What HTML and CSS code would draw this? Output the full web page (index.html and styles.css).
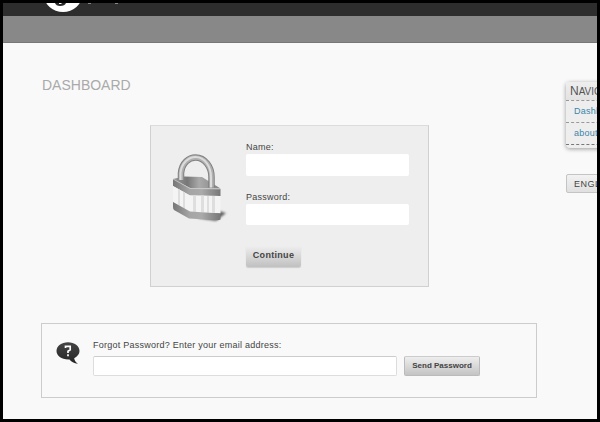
FILE: index.html
```
<!DOCTYPE html>
<html lang="en">
<head>
<meta charset="utf-8">
<title>Dashboard</title>
<link rel="stylesheet" href="styles.css">
</head>
<body>
<header class="top">
  <svg class="logo" width="80" height="10" viewBox="0 0 80 10">
    <ellipse cx="16" cy="-8" rx="19" ry="17" fill="#fff"/>
    <path d="M8 0H19Q18 3 13 3Q9 3 8 0Z" fill="#292929"/>
    <path d="M12 0H15L14 1H12Z" fill="#fff"/>
    <path d="M41 0h3v1h-3zM68 0h3v1h-3z" fill="#888"/>
  </svg>
</header>
<div class="bar"></div>
<div class="page">
  <main class="main">
    <h1 class="title">DASHBOARD</h1>
    <form class="login">
      <svg class="lock" width="60" height="72" viewBox="0 0 60 72">
        <defs>
          <linearGradient id="metal" x1="0" x2="1" y1="0" y2="0">
            <stop offset="0" stop-color="#999"/><stop offset=".3" stop-color="#777"/><stop offset=".55" stop-color="#aaa"/><stop offset="1" stop-color="#808080"/>
          </linearGradient>
          <linearGradient id="base" x1="0" x2="1" y1="0" y2="0">
            <stop offset="0" stop-color="#777"/><stop offset=".35" stop-color="#a5a5a5"/><stop offset=".6" stop-color="#aaa"/><stop offset="1" stop-color="#777"/>
          </linearGradient>
          <filter id="soft" x="-20%" y="-50%" width="140%" height="200%"><feGaussianBlur stdDeviation=".8"/></filter>
        </defs>
        <path d="M28 66L50 59L57 61L47 69Z" fill="#666" filter="url(#soft)"/>
        <path d="M4 27L15 24.500L33 25L51.500 36.500L21 36Z" fill="url(#metal)"/>
        <path d="M4 27L21 36.500L51.500 37V44L21 43.500L4 34Z" fill="url(#base)"/>
        <path d="M4 27L21 36.500L51.500 37" fill="none" stroke="#c4c4c4" stroke-width=".7"/>
        <path d="M4 34L21 43.500L51.500 44V61.500L21 59.500L4 50Z" fill="#f4f4f4"/>
        <path d="M9 37l2 1v16l-2-1zM14 39.500l2 1v16.500l-2-1zM24 43.500h3V60l-3-.3zM32 43.500h3v17l-3-.2zM38 44h2v17h-2zM43 44h3V61h-3z" fill="#dedede"/>
        <path d="M4 50L21 59.500L51.500 61.500V67.500Q50 68.500 46 68L20 66.500L5 58Q4 57 4 55Z" fill="url(#base)"/>
        <path d="M12 28V21C13 10.500 20 5.500 26.500 5.500C36 5.500 42.500 15 42.500 25V35.500" fill="none" stroke="#808080" stroke-width="6.500"/>
        <path d="M12 28V21C13 10.500 20 5.500 26.500 5.500C36 5.500 42.500 15 42.500 25V35.500" fill="none" stroke="#b0b0b0" stroke-width="4.500"/>
        <path d="M11.500 28V21C12.500 10.500 20 5 26.500 5C36 5 42 15 42 25V35.500" fill="none" stroke="#dcdcdc" stroke-width="2"/>
      </svg>
      <div class="fields">
        <label class="label" for="name">Name:</label>
        <input class="input" id="name" type="text">
        <label class="label label-password" for="password">Password:</label>
        <input class="input input-password" id="password" type="password">
        <button class="continue" type="button">Continue</button>
      </div>
    </form>
    <form class="forgot">
      <svg class="bubble" width="24" height="23" viewBox="0 0 24 23">
        <defs><linearGradient id="dark" x1="0" x2="0" y1="0" y2="1"><stop offset="0" stop-color="#444"/><stop offset="1" stop-color="#252525"/></linearGradient></defs>
        <path d="M12 .3C18.500 .3 23.500 4 23.500 9C23.500 12 21.500 14.500 18.200 16.200C18.500 18.500 20 20.500 22 21.800C18 21.500 15 19.500 13.500 17.500C6 18 .5 14 .5 9C.5 4 5.500 .3 12 .3Z" fill="url(#dark)"/>
        <path d="M9.500 6V4.300H14.200V7.800L12 9.300V11M12 12.300V14.300" fill="none" stroke="#fff" stroke-width="1.700"/>
      </svg>
      <div class="recover">
        <label class="label label-email" for="email">Forgot Password? Enter your email address:</label>
        <div class="row">
          <input class="email" id="email" type="text">
          <button class="send" type="button">Send Password</button>
        </div>
      </div>
    </form>
  </main>
  <aside class="side">
    <nav class="nav">
      <h2 class="nav-title">N<span class="small-caps">AVIGATION</span></h2>
      <a class="link">Dashboard</a>
      <a class="link">about</a>
    </nav>
    <button class="language" type="button">ENGLISH</button>
  </aside>
</div>
</body>
</html>
```
FILE: styles.css
```
* { box-sizing: border-box; }
body {
  margin: 0;
  width: 600px;
  height: 422px;
  border: 3px solid #000;
  overflow: hidden;
  background: #f9f9f9;
  color: #444;
  font-family: "Liberation Sans", Arial, sans-serif;
}
input, button { display: block; margin: 0; padding: 0; font-family: inherit; }
.top { height: 13px; padding-left: 44px; background: #2d2d2d; }
.logo { display: block; overflow: visible; }
.bar { height: 27px; background: #888; border-bottom: 1px solid #777; }
.page { display: flex; width: 680px; padding-left: 38px; }
.main { flex: none; width: 497px; padding-top: 34px; }
.title { margin: 0; height: 16px; padding-left: 1px; font-size: 14px; line-height: 16px; font-weight: 400; color: #aaa; }
.login {
  display: flex;
  width: 279px;
  height: 162px;
  margin: 32px 0 0 109px;
  padding: 15px 0 0 18px;
  background: #eee;
  border: 1px solid #d0d0d0;
  border-top-color: #dcdcdc;
}
.lock { flex: none; margin-top: 11px; }
.fields { margin-left: 17px; }
.label { display: block; height: 13px; font-size: 9px; line-height: 12px; letter-spacing: .25px; white-space: nowrap; }
.input { width: 163px; height: 22px; border: 0; border-radius: 2px; background: #fff; }
.label-password { height: 12px; margin-top: 15px; }
.input-password { height: 21px; margin-top: 1px; }
.continue {
  width: 55px;
  height: 21px;
  margin-top: 21px;
  padding-bottom: 3px;
  border: 0;
  border-radius: 2px;
  background: linear-gradient(#eee, #c0c0c0);
  box-shadow: 0 1px 1px #ccc;
  color: #444;
  font-size: 9px;
  font-weight: 700;
  letter-spacing: .3px;
}
.forgot {
  display: flex;
  width: 496px;
  height: 75px;
  margin-top: 36px;
  padding: 15px 0 0 14px;
  border: 1px solid #ccc;
}
.bubble { flex: none; margin-top: 3px; }
.recover { margin-left: 13px; }
.row { display: flex; gap: 7px; margin-top: 4px; }
.email { width: 304px; height: 20px; border: 1px solid #ddd; border-top-color: #ccc; border-radius: 2px; background: #fff; }
.send {
  width: 76px;
  height: 20px;
  padding-bottom: 1px;
  border: 1px solid #bbb;
  border-top-color: #ccc;
  border-radius: 2px;
  background: linear-gradient(#eee, #c4c4c4);
  color: #444;
  font-size: 8px;
  font-weight: 700;
  white-space: nowrap;
}
.side { flex: none; width: 100px; margin-left: 28px; padding-top: 39px; }
.nav { height: 66px; border-radius: 4px; background: #eee; box-shadow: 0 1px 4px #999; }
.nav-title { margin: 0; height: 18px; padding-left: 4px; font-size: 12px; line-height: 18px; font-weight: 400; color: #555; background: linear-gradient(#eee, #e2e2e2); }
.small-caps { font-size: 10px; }
.link { display: block; height: 22px; padding-left: 8px; border-top: 1px dashed #999; color: #3b86aa; font-size: 9px; line-height: 21px; letter-spacing: .25px; }
.link:last-child { height: 23px; border-bottom: 1px dashed #777; }
.language {
  width: 90px;
  height: 19px;
  margin-top: 26px;
  padding-left: 7px;
  border: 1px solid #c4c4c4;
  border-radius: 2px;
  background: linear-gradient(#f2f2f2, #e0e0e0);
  color: #444;
  font-size: 9px;
  letter-spacing: .5px;
  text-align: left;
}
```
